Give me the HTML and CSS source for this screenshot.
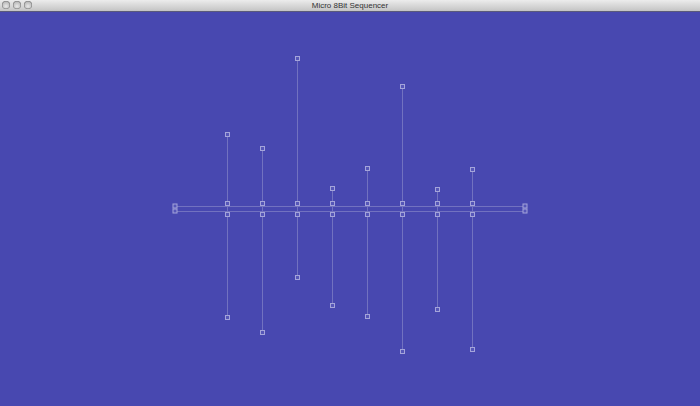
FILE: index.html
```html
<!DOCTYPE html>
<html>
<head>
<meta charset="utf-8">
<link rel="stylesheet" href="styles.css">
</head>
<body>
<div class="window">
  <div class="titlebar">
    <div class="lights">
      <span class="light"></span><span class="light"></span><span class="light"></span>
    </div>
    <div class="title">Micro 8Bit Sequencer</div>
  </div>
  <div class="canvas">
    <svg class="seq" width="700" height="394" viewBox="0 12 700 394">
      <g class="lines">
        <line x1="175" y1="206.5" x2="525" y2="206.5"/>
        <line x1="175" y1="211.5" x2="525" y2="211.5"/>
        <line x1="227.5" y1="134" x2="227.5" y2="317"/>
        <line x1="262.5" y1="148" x2="262.5" y2="332"/>
        <line x1="297.5" y1="58" x2="297.5" y2="277"/>
        <line x1="332.5" y1="188" x2="332.5" y2="305"/>
        <line x1="367.5" y1="168" x2="367.5" y2="316"/>
        <line x1="402.5" y1="86" x2="402.5" y2="351"/>
        <line x1="437.5" y1="189" x2="437.5" y2="309"/>
        <line x1="472.5" y1="169" x2="472.5" y2="349"/>
      </g>
      <g class="nodes">
        <rect x="173" y="204" width="4" height="4"/>
        <rect x="173" y="209" width="4" height="4"/>
        <rect x="523" y="204" width="4" height="4"/>
        <rect x="523" y="209" width="4" height="4"/>

        <rect x="225.5" y="132.5" width="4" height="4"/>
        <rect x="225.5" y="201.5" width="4" height="4"/>
        <rect x="225.5" y="212.5" width="4" height="4"/>
        <rect x="225.5" y="315.5" width="4" height="4"/>

        <rect x="260.5" y="146.5" width="4" height="4"/>
        <rect x="260.5" y="201.5" width="4" height="4"/>
        <rect x="260.5" y="212.5" width="4" height="4"/>
        <rect x="260.5" y="330.5" width="4" height="4"/>

        <rect x="295.5" y="56.5" width="4" height="4"/>
        <rect x="295.5" y="201.5" width="4" height="4"/>
        <rect x="295.5" y="212.5" width="4" height="4"/>
        <rect x="295.5" y="275.5" width="4" height="4"/>

        <rect x="330.5" y="186.5" width="4" height="4"/>
        <rect x="330.5" y="201.5" width="4" height="4"/>
        <rect x="330.5" y="212.5" width="4" height="4"/>
        <rect x="330.5" y="303.5" width="4" height="4"/>

        <rect x="365.5" y="166.5" width="4" height="4"/>
        <rect x="365.5" y="201.5" width="4" height="4"/>
        <rect x="365.5" y="212.5" width="4" height="4"/>
        <rect x="365.5" y="314.5" width="4" height="4"/>

        <rect x="400.5" y="84.5" width="4" height="4"/>
        <rect x="400.5" y="201.5" width="4" height="4"/>
        <rect x="400.5" y="212.5" width="4" height="4"/>
        <rect x="400.5" y="349.5" width="4" height="4"/>

        <rect x="435.5" y="187.5" width="4" height="4"/>
        <rect x="435.5" y="201.5" width="4" height="4"/>
        <rect x="435.5" y="212.5" width="4" height="4"/>
        <rect x="435.5" y="307.5" width="4" height="4"/>

        <rect x="470.5" y="167.5" width="4" height="4"/>
        <rect x="470.5" y="201.5" width="4" height="4"/>
        <rect x="470.5" y="212.5" width="4" height="4"/>
        <rect x="470.5" y="347.5" width="4" height="4"/>
      </g>
    </svg>
  </div>
</div>
</body>
</html>
```

FILE: styles.css
```css
html, body {
  margin: 0;
  padding: 0;
  width: 700px;
  height: 406px;
  overflow: hidden;
  background: #4848b0;
}
.window {
  display: flex;
  flex-direction: column;
  width: 700px;
  height: 406px;
}
.titlebar {
  position: relative;
  height: 11px;
  flex: 0 0 11px;
  background: linear-gradient(#ececec, #c4c4c4);
  border-bottom: 1px solid #5b5b7a;
  display: flex;
  align-items: center;
  justify-content: center;
}
.lights {
  position: absolute;
  left: 2px;
  top: 1px;
  display: flex;
  gap: 3px;
}
.light {
  width: 8px;
  height: 8px;
  border-radius: 50%;
  background: radial-gradient(circle at 50% 65%, #e8e8e8, #a0a0a0);
  box-shadow: inset 0 0 0 0.5px #7a7a7a;
}
.title {
  font-family: "Liberation Sans", Arial, sans-serif;
  font-size: 8px;
  line-height: 11px;
  color: #333;
}
.canvas {
  flex: 1;
  background: #4848b0;
  overflow: hidden;
}
.seq {
  display: block;
}
.lines line {
  stroke: #7272c0;
  stroke-width: 1;
}
.nodes rect {
  fill: #5656b8;
  stroke: #a4a4da;
  stroke-width: 1;
}
```
